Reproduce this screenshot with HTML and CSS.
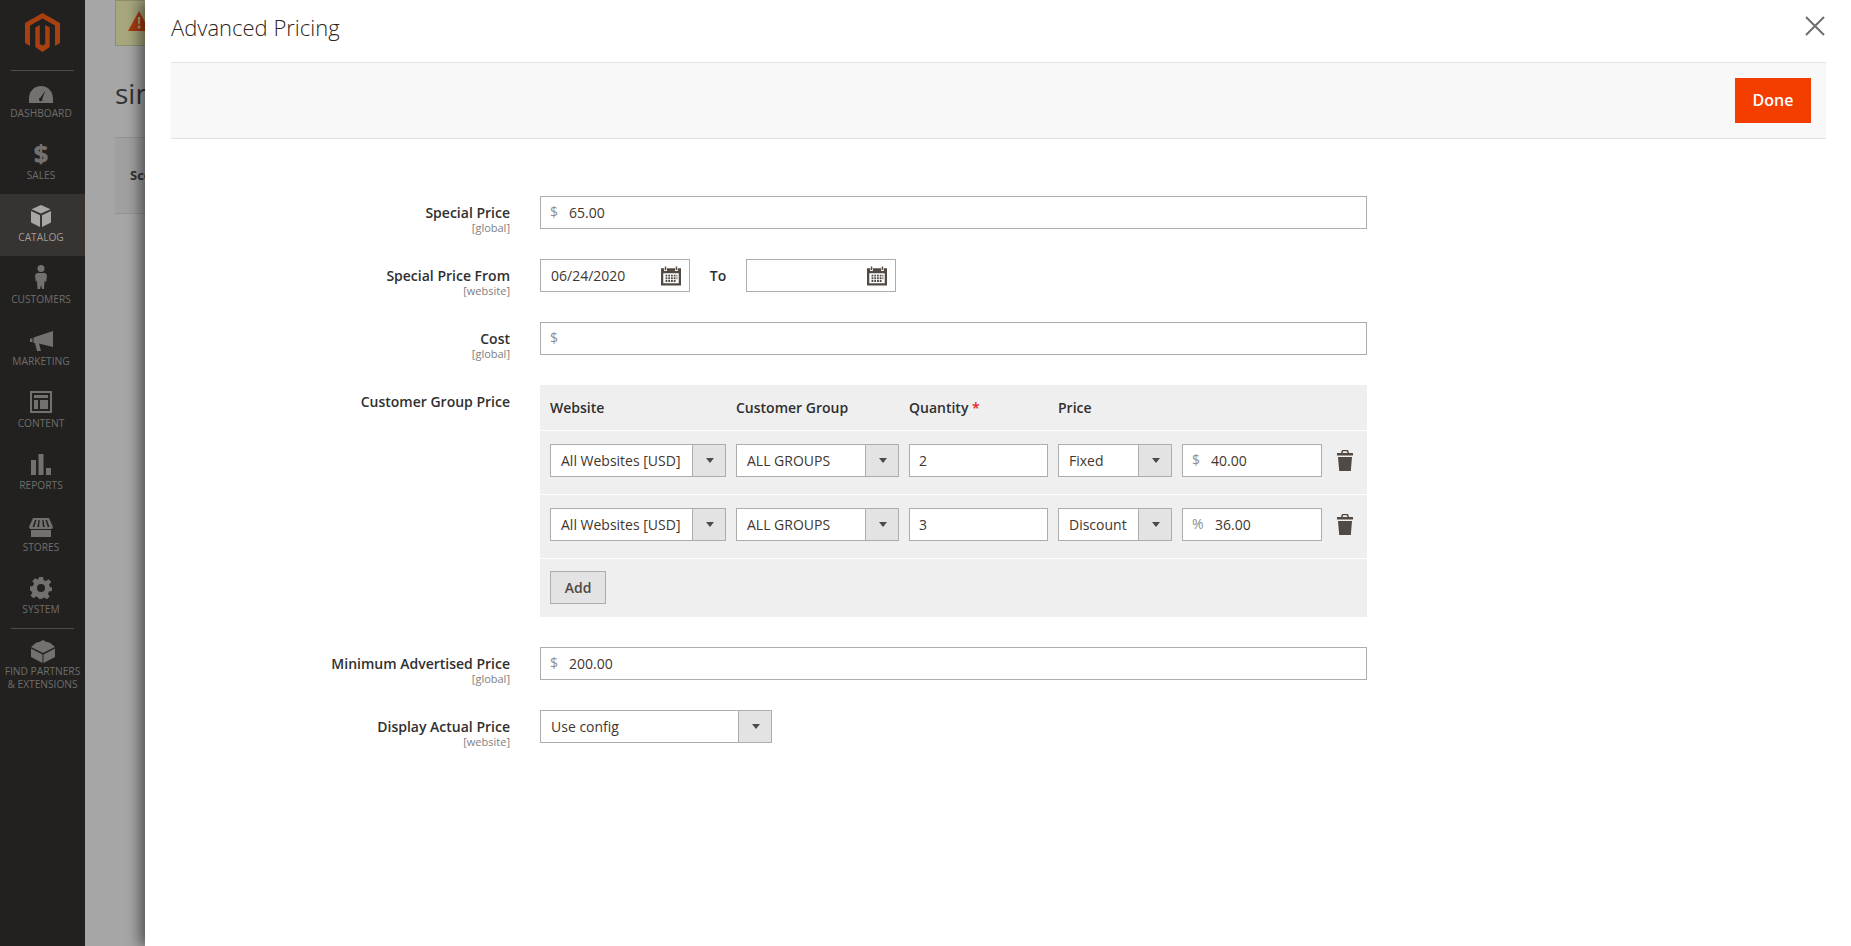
FILE: index.html
```html
<!DOCTYPE html>
<html lang="en">
  <head>
    <meta charset="UTF-8" />
    <meta name="viewport" content="width=device-width, initial-scale=1.0" />
    <title>Advanced Pricing</title>
    <link rel="stylesheet" href="styles.css">
  </head>
  <body>
    <div id="page">
      <nav id="sidebar">
        <div class="logo">
          <svg width="35" height="39" viewBox="0 0 35 39"><path d="M17.5 0L35 10v20l-5 2.9V12.6L17.5 5.4 5 12.6v20.3L0 30V10z"/><path d="M10.3 14.5l4.5-2.6V31l2.7 1.6 2.7-1.6V11.9l4.5 2.6V34l-7.2 5-7.2-5z"/></svg>
        </div>
        <a class="nav-item">
          <svg width="24" height="17" viewBox="0 0 24 17"><path fill-rule="evenodd" d="M12 0C5 0 0 5.500 0 12.500V17h24v-4.500C24 5.500 19 0 12 0zM16.500 4.500L13.300 12.500a1.800 1.800 0 1 1-2-.8z"/></svg>
          <span>Dashboard</span>
        </a>
        <a class="nav-item">
          <span class="dollar">$</span>
          <span>Sales</span>
        </a>
        <a class="nav-item active">
          <svg width="20" height="22" viewBox="0 0 20 22"><path d="M10 0l9.500 4.200L10 8.600.5 4.200z"/><path d="M0 6l9 4.200V22l-9-4.500zM20 6l-9 4.200V22l9-4.500z"/></svg>
          <span>Catalog</span>
        </a>
        <a class="nav-item">
          <svg width="12" height="24" viewBox="0 0 12 24"><circle cx="6" cy="3.500" r="3.500"/><path d="M2 8h8l2 2-.8 7-1.700-1-.5 8H7l-1-4-1 4H2.500L2 15.500.8 17 0 10z"/></svg>
          <span>Customers</span>
        </a>
        <a class="nav-item">
          <svg width="23" height="20" viewBox="0 0 23 20"><path d="M23 0v16L9 12.500 11 20H7L5 12H3.500V6.500z"/><path d="M0 7.500h2.500V11H0z"/></svg>
          <span>Marketing</span>
        </a>
        <a class="nav-item">
          <svg width="22" height="22" viewBox="0 0 22 22"><path fill-rule="evenodd" d="M0 0h22v22H0zM2 2v18h18V2z"/><path d="M4 4h14v3H4zM4 9h4v9H4zM10 9h8v9h-8z"/></svg>
          <span>Content</span>
        </a>
        <a class="nav-item">
          <svg width="20" height="21" viewBox="0 0 20 21"><path d="M0 6h5v15H0zM7.500 0h5v21h-5zM15 14h5v7h-5z"/></svg>
          <span>Reports</span>
        </a>
        <a class="nav-item">
          <svg width="24" height="19" viewBox="0 0 24 19"><path fill-rule="evenodd" d="M4 0h16l4 9-1 2H1L0 9zM6 2L3.500 9h1.800L7.500 2zM9.500 2L8.300 9h1.800l.6-7zM13.300 2l.6 7h1.800l-1.200-7zM16.500 2l2.200 7h1.800L18 2z"/><path d="M2 12h20v7H2z"/></svg>
          <span>Stores</span>
        </a>
        <a class="nav-item">
          <svg width="22" height="22" viewBox="0 0 22 22"><path fill-rule="evenodd" d="M9 0h4l.6 3 2.400 1 2.600-1.700 2.800 2.800L19 7.600l1 2.400 2 .5v3.500l-3 .6-1 2.300 1.700 2.500-2.800 2.800-2.600-1.700-2.300 1-.5 1H9l-.6-2-2.400-1-2.600 1.700-2.800-2.800L2.300 16 1.300 14 0 13.500V9.500l3-.6 1-2.300-1.700-2.500 2.800-2.800L7.700 2.500l.7-.4zM11 7a4 4 0 1 0 0 8 4 4 0 0 0 0-8z"/></svg>
          <span>System</span>
        </a>
        <a class="nav-item extra">
          <svg width="24" height="23" viewBox="0 0 24 23"><path d="M12 0l3 1.700 4 1 5 4.300-12 6L0 7l5-4.300 4-1z"/><path d="M0 8.500l11.500 6V23L0 17zM24 8.500l-11.500 6V23L24 17z"/></svg>
          <span>Find Partners<br>&amp; Extensions</span>
        </a>
      </nav>

      <main id="behind">
        <div class="notice">
          <svg width="22" height="20" viewBox="0 0 22 20"><path fill-rule="evenodd" d="M11 0l11 20H0zM9.800 6l.4 7.500h1.600l.4-7.500zM11 14.500a1.500 1.500 0 1 0 0 3 1.500 1.500 0 0 0 0-3z"/></svg>
        </div>
        <h1 class="page-name">simple product</h1>
        <div class="scope-bar">Scope</div>
      </main>

      <section id="modal">
        <header class="modal-head">
          <h2>Advanced Pricing</h2>
          <button class="close" aria-label="Close">
            <svg width="20" height="20" viewBox="0 0 20 20"><path d="M1 1l18 18M19 1L1 19"/></svg>
          </button>
        </header>
        <div class="toolbar">
          <button class="done">Done</button>
        </div>

        <form class="pricing-form">
          <div class="field">
            <label>Special Price<small>[global]</small></label>
            <div class="input-box"><i>$</i><span>65.00</span></div>
          </div>

          <div class="field">
            <label>Special Price From<small>[website]</small></label>
            <div class="date-range">
              <div class="input-box date">
                <span>06/24/2020</span>
                <svg width="20" height="20" viewBox="0 0 22 22"><use href="#calendar"/></svg>
              </div>
              <b>To</b>
              <div class="input-box date">
                <span></span>
                <svg width="20" height="20" viewBox="0 0 22 22"><use href="#calendar"/></svg>
              </div>
            </div>
          </div>

          <div class="field">
            <label>Cost<small>[global]</small></label>
            <div class="input-box"><i>$</i><span></span></div>
          </div>

          <div class="field">
            <label>Customer Group Price</label>
            <table class="tiers">
              <thead>
                <tr>
                  <th class="c-site">Website</th>
                  <th class="c-group">Customer Group</th>
                  <th class="c-qty">Quantity <em>*</em></th>
                  <th class="c-type">Price</th>
                  <th class="c-price"></th>
                  <th></th>
                </tr>
              </thead>
              <tbody>
                <tr>
                  <td><div class="select"><span>All Websites [USD]</span><i></i></div></td>
                  <td><div class="select"><span>ALL GROUPS</span><i></i></div></td>
                  <td><div class="input-box"><span>2</span></div></td>
                  <td><div class="select"><span>Fixed</span><i></i></div></td>
                  <td><div class="input-box"><i>$</i><span>40.00</span></div></td>
                  <td class="c-del"><svg width="16" height="21" viewBox="0 0 16 21"><use href="#trash"/></svg></td>
                </tr>
                <tr>
                  <td><div class="select"><span>All Websites [USD]</span><i></i></div></td>
                  <td><div class="select"><span>ALL GROUPS</span><i></i></div></td>
                  <td><div class="input-box"><span>3</span></div></td>
                  <td><div class="select"><span>Discount</span><i></i></div></td>
                  <td><div class="input-box"><i class="pct">%</i><span>36.00</span></div></td>
                  <td class="c-del"><svg width="16" height="21" viewBox="0 0 16 21"><use href="#trash"/></svg></td>
                </tr>
              </tbody>
              <tfoot>
                <tr>
                  <td colspan="6"><button type="button" class="add">Add</button></td>
                </tr>
              </tfoot>
            </table>
          </div>

          <div class="field">
            <label>Minimum Advertised Price<small>[global]</small></label>
            <div class="input-box"><i>$</i><span>200.00</span></div>
          </div>

          <div class="field">
            <label>Display Actual Price<small>[website]</small></label>
            <div class="select wide"><span>Use config</span><i></i></div>
          </div>
        </form>
      </section>
    </div>

    <svg class="defs" width="0" height="0">
      <symbol id="calendar" viewBox="0 1 22 21">
        <path fill-rule="evenodd" d="M0 3h3.500v3h3V3h9v3h3V3H22v19H0zM2.500 8.500v11h17v-11z"/>
        <path d="M4.200 1h1.600v4H4.200zM16.200 1h1.600v4h-1.600z"/>
        <path d="M5 10h2v2H5zM8 10h2v2H8zM11 10h2v2h-2zM14 10h2v2h-2zM17 10h1v2h-1zM5 13h2v2H5zM8 13h2v2H8zM11 13h2v2h-2zM14 13h2v2h-2zM17 13h1v2h-1zM5 16h2v2H5zM8 16h2v2H8zM11 16h2v2h-2zM14 16h2v2h-2z"/>
      </symbol>
      <symbol id="trash" viewBox="0 0 16 21">
        <path fill-rule="evenodd" d="M5 0h6l1 3h4v2.500H0V3h4zM6 1.300L5.600 3h4.800L10 1.300z"/>
        <path d="M1 7h14l-1.200 14H2.200z"/>
      </symbol>
    </svg>
  </body>
</html>
```

FILE: styles.css
```css
html {
  box-sizing: border-box;
}
*,
*:before,
*:after {
  box-sizing: inherit;
}
body {
  margin: 0;
  padding: 0;
  height: 946px;
  overflow: hidden;
  font-family: "Open Sans", sans-serif;
  font-size: 14px;
  color: #303030;
  background-color: #a6a6a6;
}
#page {
  display: flex;
  height: 946px;
  position: relative;
}
.defs {
  position: absolute;
}

/* sidebar */
#sidebar {
  width: 85px;
  flex: none;
  padding-right: 3px;
  background-color: #222120;
  display: flex;
  flex-direction: column;
  align-items: stretch;
}
.logo {
  height: 71px;
  margin: 0 8px -1px 11px;
  padding-top: 13px;
  border-bottom: 1px solid #4f4d4b;
  display: flex;
  justify-content: center;
}
.logo svg {
  fill: #a8400f;
}
.nav-item {
  height: 62px;
  display: flex;
  flex-direction: column;
  align-items: center;
  justify-content: flex-end;
  gap: 4px;
  padding-bottom: 12px;
  font-size: 10.200px;
  line-height: 13px;
  text-transform: uppercase;
  text-align: center;
  color: #6f6d6a;
  white-space: nowrap;
}
.nav-item svg {
  fill: #737170;
}
.nav-item.active {
  background-color: #373330;
  margin-right: -3px;
  padding-right: 3px;
  color: #a09d9a;
}
.nav-item.active svg {
  fill: #a9a6a3;
}
.nav-item.extra {
  height: 72px;
  gap: 2px;
  margin: 0 8px 0 11px;
  padding-bottom: 0;
  justify-content: flex-start;
  padding-top: 11px;
  border-top: 1px solid #4f4d4b;
}
.dollar {
  font-size: 25px;
  font-weight: 800;
  line-height: 24px;
  color: #737170;
}

/* page behind the modal */
#behind {
  flex: 1;
  padding-left: 30px;
}
.notice {
  width: 120px;
  height: 46px;
  background-color: #a6a77c;
  border: 1px solid #8c8d6c;
  padding: 10px 0 0 12px;
}
.notice svg {
  fill: #a83a10;
}
.page-name {
  margin: 29px 0 0;
  font-size: 28px;
  line-height: 36px;
  font-weight: 400;
  color: #333;
  white-space: nowrap;
}
.scope-bar {
  width: 300px;
  height: 77px;
  margin-top: 26px;
  padding-left: 15px;
  line-height: 75px;
  font-size: 13px;
  font-weight: 700;
  background-color: #a0a0a0;
  border-top: 1px solid #939393;
  border-bottom: 1px solid #939393;
}

/* modal */
#modal {
  position: absolute;
  top: 0;
  left: 145px;
  right: 0;
  bottom: 0;
  padding-left: 26px;
  background-color: white;
  box-shadow: -6px 0 12px rgba(0, 0, 0, 0.45);
}
.modal-head {
  height: 62px;
  padding-right: 26px;
  display: flex;
  align-items: flex-start;
  justify-content: space-between;
}
.modal-head h2 {
  margin: 11px 0 0;
  font-size: 22px;
  line-height: 32px;
  font-weight: 300;
  color: #2f2520;
}
.close {
  margin: 16px 0 0;
  padding: 0;
  width: 21px;
  height: 21px;
  border: none;
  background: none;
}
.close svg {
  stroke: #6e6e6e;
  stroke-width: 2;
  fill: none;
}
.toolbar {
  height: 77px;
  margin-right: 25px;
  background-color: #f8f8f8;
  border-top: 1px solid #e3e3e3;
  border-bottom: 1px solid #e3e3e3;
  display: flex;
  justify-content: flex-end;
  align-items: center;
  padding-right: 15px;
}
.done {
  width: 76px;
  height: 45px;
  padding: 0 0 2px;
  border: none;
  background-color: #f43e00;
  color: white;
  font-family: inherit;
  font-size: 16px;
  font-weight: 600;
}

/* form */
.pricing-form {
  padding-top: 57px;
}
.field {
  display: grid;
  grid-template-columns: 339px 827px;
  column-gap: 30px;
  margin-bottom: 30px;
}
.field label {
  text-align: right;
  font-weight: 600;
  line-height: 19px;
  padding-top: 7px;
  height: 33px;
  white-space: nowrap;
}
.field small {
  display: block;
  font-size: 11px;
  line-height: 11px;
  font-weight: 400;
  color: #808080;
}
.input-box,
.select {
  height: 33px;
  display: flex;
  align-items: center;
  background-color: white;
  border: 1px solid #adadad;
  line-height: 31px;
  color: #41362f;
  white-space: nowrap;
}
.input-box {
  padding-left: 9px;
}
.input-box i {
  font-style: normal;
  font-size: 14px;
  color: #8f8f8f;
  width: 19px;
  position: relative;
  top: -1px;
}
.input-box i.pct {
  width: 23px;
}
.date-range {
  display: flex;
  align-items: center;
}
.date-range b {
  font-weight: 600;
  width: 56px;
  text-align: center;
}
.input-box.date {
  width: 150px;
  justify-content: space-between;
  padding-left: 10px;
  padding-right: 8px;
}
.input-box.date svg {
  fill: #514943;
}
.select {
  justify-content: space-between;
  padding-left: 10px;
}
.select i {
  width: 33px;
  height: 31px;
  flex: none;
  padding-left: 2px;
  background-color: #e3e3e3;
  border-left: 1px solid #adadad;
  display: flex;
  align-items: center;
  justify-content: center;
}
.select i:after {
  content: "";
  border-top: 5px solid #514943;
  border-left: 4px solid transparent;
  border-right: 4px solid transparent;
}
.select.wide {
  width: 232px;
}

/* tier price table */
.tiers {
  width: 827px;
  table-layout: fixed;
  border-collapse: collapse;
  background-color: #efefef;
}
.tiers th {
  height: 45px;
  padding: 0 0 0 10px;
  text-align: left;
  font-weight: 600;
}
.tiers th em {
  font-style: normal;
  color: #e22626;
}
.c-site {
  width: 186px;
}
.c-group {
  width: 173px;
}
.c-qty {
  width: 149px;
}
.c-type {
  width: 124px;
}
.c-price {
  width: 150px;
}
.tiers td {
  height: 64px;
  padding: 0 0 4px 10px;
  border-top: 1px solid white;
}
.tiers td.c-del {
  padding-left: 15px;
}
.c-del svg {
  fill: #514943;
  display: block;
}
.tiers tfoot td {
  height: 59px;
  padding-bottom: 0;
}
.add {
  width: 56px;
  height: 33px;
  padding: 0;
  background-color: #e3e3e3;
  border: 1px solid #adadad;
  font-family: inherit;
  font-size: 14px;
  font-weight: 600;
  color: #514943;
  display: block;
}
```
